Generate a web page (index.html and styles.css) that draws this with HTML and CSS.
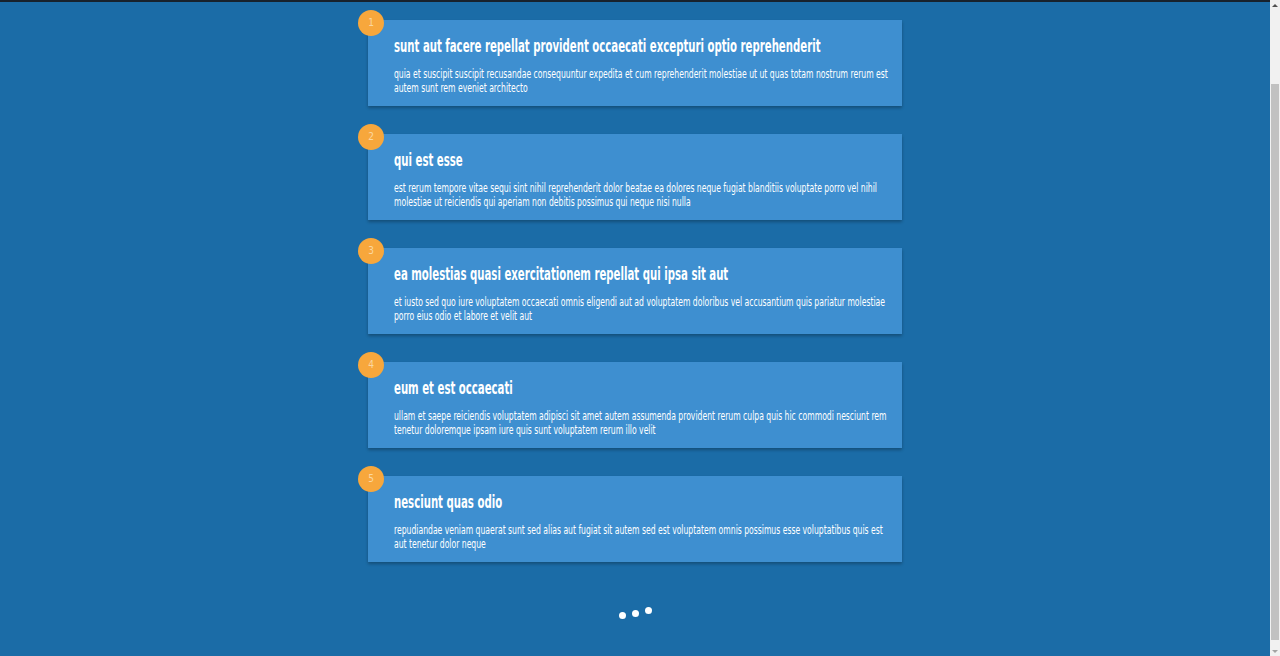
FILE: index.html
```html
<!DOCTYPE html>
<html lang="en">
<head>
<meta charset="utf-8">
<title>Posts</title>
<link rel="stylesheet" href="styles.css">
</head>
<body>
<div class="app">
  <div class="viewport">
    <div class="topline"></div>
    <main class="feed">
      <article class="post">
        <span class="badge">1</span>
        <h2 class="post-title">sunt aut facere repellat provident occaecati excepturi optio reprehenderit</h2>
        <p class="post-body">quia et suscipit suscipit recusandae consequuntur expedita et cum reprehenderit molestiae ut ut quas totam nostrum rerum est autem sunt rem eveniet architecto</p>
      </article>
      <article class="post">
        <span class="badge">2</span>
        <h2 class="post-title">qui est esse</h2>
        <p class="post-body">est rerum tempore vitae sequi sint nihil reprehenderit dolor beatae ea dolores neque fugiat blanditiis voluptate porro vel nihil molestiae ut reiciendis qui aperiam non debitis possimus qui neque nisi nulla</p>
      </article>
      <article class="post">
        <span class="badge">3</span>
        <h2 class="post-title">ea molestias quasi exercitationem repellat qui ipsa sit aut</h2>
        <p class="post-body">et iusto sed quo iure voluptatem occaecati omnis eligendi aut ad voluptatem doloribus vel accusantium quis pariatur molestiae porro eius odio et labore et velit aut</p>
      </article>
      <article class="post">
        <span class="badge">4</span>
        <h2 class="post-title">eum et est occaecati</h2>
        <p class="post-body">ullam et saepe reiciendis voluptatem adipisci sit amet autem assumenda provident rerum culpa quis hic commodi nesciunt rem tenetur doloremque ipsam iure quis sunt voluptatem rerum illo velit</p>
      </article>
      <article class="post">
        <span class="badge">5</span>
        <h2 class="post-title">nesciunt quas odio</h2>
        <p class="post-body">repudiandae veniam quaerat sunt sed alias aut fugiat sit autem sed est voluptatem omnis possimus esse voluptatibus quis est aut tenetur dolor neque</p>
      </article>
    </main>
    <div class="loader">
      <span class="dot dot-1"></span>
      <span class="dot dot-2"></span>
      <span class="dot dot-3"></span>
    </div>
  </div>
  <div class="scrollbar">
    <span class="sb-btn"><span class="arrow-up"></span></span>
    <div class="sb-track"><div class="sb-thumb"></div></div>
    <span class="sb-btn"><span class="arrow-down"></span></span>
  </div>
</div>
</body>
</html>
```

FILE: styles.css
```css
html, body {
  margin: 0;
  padding: 0;
  height: 100%;
  overflow: hidden;
}

body {
  background: #1b6ca7;
  font-family: "DejaVu Sans Condensed", "DejaVu Sans", sans-serif;
  font-stretch: condensed;
  color: #fff;
}

.app {
  display: flex;
  height: 100vh;
}

.viewport {
  flex: 1;
  min-width: 0;
  overflow: hidden;
  background: #1b6ca7;
}

.topline {
  height: 2px;
  background: #18222d;
}

.feed {
  width: 534px;
  margin: 0 auto;
  padding-top: 18px;
  display: flex;
  flex-direction: column;
  gap: 28px;
}

.post {
  position: relative;
  background: #3e8fd0;
  box-shadow: 0 2px 3px rgba(0, 0, 0, 0.28);
  padding: 13px 14px 12px 26px;
  height: 86px;
  box-sizing: border-box;
}

.badge {
  position: absolute;
  left: -10px;
  top: -10px;
  width: 26px;
  height: 26px;
  border-radius: 50%;
  background: #f7a73c;
  color: #fbd7a0;
  font-size: 10px;
  line-height: 26px;
  text-align: center;
  font-family: "DejaVu Sans", sans-serif;
}

.post-title {
  margin: 0 0 9px;
  font-size: 18.5px;
  line-height: 26px;
  font-weight: 700;
  white-space: nowrap;
  transform: scaleX(0.61);
  transform-origin: left center;
}

.post-body {
  margin: 0;
  width: calc(100% / 0.70);
  font-size: 12.2px;
  line-height: 13.5px;
  transform: scaleX(0.70);
  transform-origin: left top;
}

.loader {
  display: flex;
  justify-content: center;
  gap: 6px;
  padding-top: 44px;
}

.dot {
  width: 7px;
  height: 7px;
  border-radius: 50%;
  background: #fff;
}
.dot-1 { transform: translateY(6px); }
.dot-2 { transform: translateY(4px); }
.dot-3 { transform: translateY(1px); }

.scrollbar {
  width: 10px;
  flex: 0 0 10px;
  display: flex;
  flex-direction: column;
  background: #f1f1f1;
}

.sb-btn {
  height: 10px;
  flex: 0 0 10px;
  display: flex;
  align-items: center;
  justify-content: center;
}

.arrow-up {
  width: 0;
  height: 0;
  border-left: 3px solid transparent;
  border-right: 3px solid transparent;
  border-bottom: 3px solid #505050;
}

.arrow-down {
  width: 0;
  height: 0;
  border-left: 3px solid transparent;
  border-right: 3px solid transparent;
  border-top: 3px solid #a3a3a3;
}

.sb-track {
  flex: 1;
  display: flex;
  flex-direction: column;
}

.sb-thumb {
  margin: 74px 1px 0;
  height: 556px;
  background: #c1c1c1;
}
```
